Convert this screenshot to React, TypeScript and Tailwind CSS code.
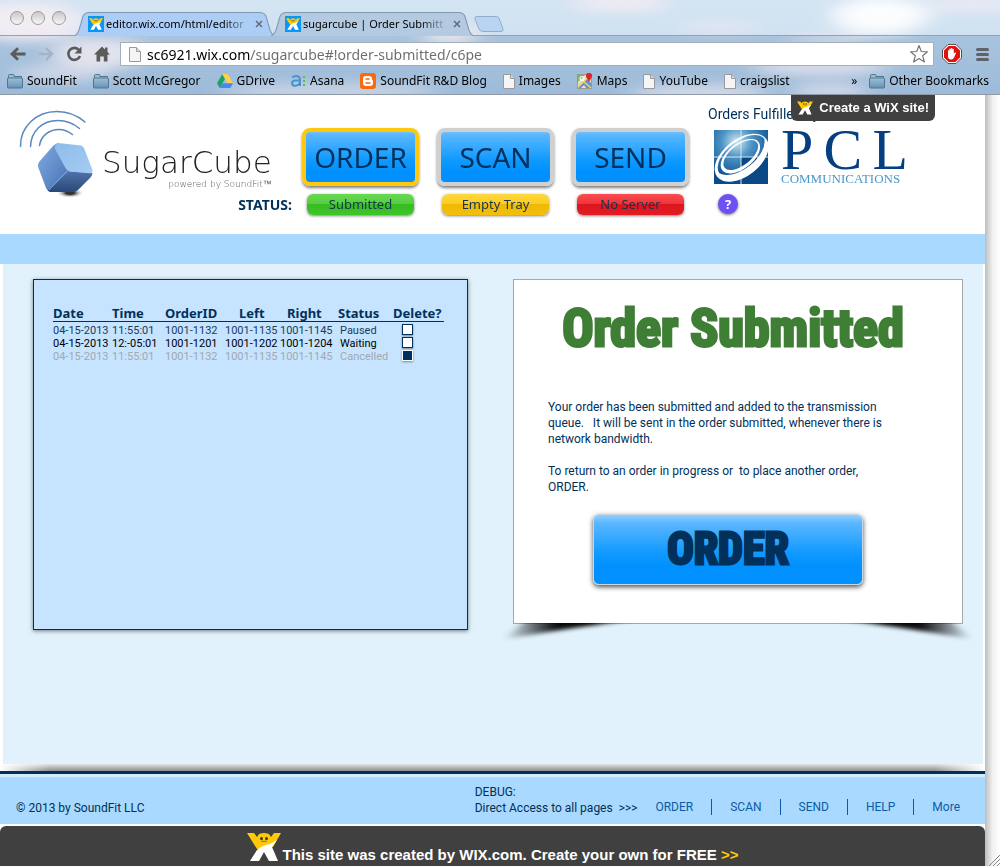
import React, { useState } from "react";

const TEXT = "font-['Noto_Sans',sans-serif]";

function WixMan({ className }: { className: string }) {
  return (
    <svg viewBox="0 0 34 28" className={className} aria-hidden="true">
      <path d="M0 0H7L10 4L12 1Q17 -1 22 1L24 4L27 0H34L26 14L20 16L10 16Z" fill="#ffc90a" />
      <path d="M30 7L25 14L31 28H22L17 19L12 28H3L10 17Q16 12 23 11Z" fill="#fff" />
      <circle cx="14.500" cy="5.500" r="1.500" fill="#403a20" />
      <circle cx="19.500" cy="5.500" r="1.500" fill="#403a20" />
      <path d="M14 8Q17 9 20 8" stroke="#6b5a10" strokeWidth="0.800" fill="none" />
    </svg>
  );
}

function WixFavicon() {
  return (
    <span className="flex size-4 shrink-0 items-center justify-center bg-[#0a96f5]">
      <WixMan className="h-3 w-[14px]" />
    </span>
  );
}

function Clouds() {
  return (
    <svg className="absolute inset-0 h-full w-full" viewBox="0 0 1000 95" preserveAspectRatio="none" aria-hidden="true">
      <defs>
        <linearGradient id="sky" x1="0" y1="0" x2="0" y2="1">
          <stop offset="0" stopColor="#d3e4f3" />
          <stop offset="0.370" stopColor="#d0e1f1" />
          <stop offset="0.380" stopColor="#a8c3dd" />
          <stop offset="1" stopColor="#9dbbd9" />
        </linearGradient>
        <filter id="soft" filterUnits="userSpaceOnUse" x="-50" y="-30" width="1100" height="160">
          <feGaussianBlur stdDeviation="12 6" />
        </filter>
      </defs>
      <rect width="1000" height="95" fill="url(#sky)" />
      <g filter="url(#soft)" fill="#f5edf3">
        <ellipse cx="25" cy="22" rx="60" ry="20" opacity="0.9" />
        <ellipse cx="100" cy="54" rx="50" ry="16" opacity="0.75" />
        <ellipse cx="60" cy="74" rx="50" ry="9" opacity="0.5" />
        <ellipse cx="620" cy="3" rx="50" ry="9" opacity="0.8" />
        <ellipse cx="880" cy="16" rx="48" ry="19" fill="#fff" opacity="0.9" />
        <ellipse cx="970" cy="4" rx="50" ry="9" opacity="0.6" />
        <ellipse cx="450" cy="36" rx="28" ry="10" opacity="0.8" />
        <ellipse cx="720" cy="27" rx="45" ry="6" opacity="0.5" />
        <ellipse cx="830" cy="40" rx="40" ry="6" opacity="0.5" />
        <ellipse cx="820" cy="68" rx="70" ry="8" opacity="0.7" />
        <ellipse cx="700" cy="94" rx="70" ry="9" opacity="0.6" />
        <ellipse cx="830" cy="92" rx="40" ry="8" opacity="0.6" />
        <ellipse cx="330" cy="92" rx="110" ry="8" opacity="0.5" />
      </g>
    </svg>
  );
}

function Tab({ title, active }: { title: string; active?: boolean }) {
  return (
    <div className={active ? "relative z-10 -ml-1 h-6 w-[203px]" : "relative h-6 w-[201px]"}>
      <svg className="absolute inset-0 h-full w-full" viewBox="0 0 200 24" preserveAspectRatio="none" aria-hidden="true">
        <path
          d="M0 24Q3 23 5 18L9 4Q11 .5 15 .5H185Q189 .5 191 4L195 18Q197 23 200 24"
          fill={active ? "#b3cae1" : "#abcdf6"}
          stroke="#8296ac"
          strokeWidth="1"
        />
      </svg>
      <div className="relative flex h-full items-center pl-3.5 pr-3">
        <WixFavicon />
        <a
          href="#tab"
          className="ml-0.5 w-[146px] shrink-0 whitespace-nowrap text-[11px] text-black [mask-image:linear-gradient(90deg,#000_80%,transparent)]"
        >
          {title}
        </a>
        <button aria-label={`Close ${title}`} className="ml-0.5 flex size-3 items-center justify-center">
          <svg viewBox="0 0 8 8" className="size-2" aria-hidden="true">
            <path d="M1 1L7 7M7 1L1 7" stroke="#5c6672" strokeWidth="1.400" />
          </svg>
        </button>
      </div>
    </div>
  );
}

function FolderIcon() {
  return (
    <svg viewBox="0 0 16 15" className="h-[15px] w-4 shrink-0" aria-hidden="true">
      <defs>
        <linearGradient id="folder" x1="0" y1="0" x2="0" y2="1">
          <stop offset="0" stopColor="#9fbfd6" />
          <stop offset="1" stopColor="#6592b5" />
        </linearGradient>
      </defs>
      <path d="M1.500 3V1.500Q1.500 .5 2.500 .5H6Q7 .5 7 1.500V2.500H14.500V5H1.500Z" fill="#9cbbd1" stroke="#50758f" />
      <rect x="0.500" y="4" width="15" height="10" rx="1" fill="url(#folder)" stroke="#50758f" />
    </svg>
  );
}

function PageIcon() {
  return (
    <svg viewBox="0 0 12 15" className="h-[15px] w-3 shrink-0" aria-hidden="true">
      <path d="M.5 .5H7.500L11.500 4.500V14.500H.5Z" fill="#f5f5f5" stroke="#9a9a9a" />
      <path d="M7.500 .5V4.500H11.500" fill="#ddd" stroke="#9a9a9a" />
    </svg>
  );
}

function DriveIcon() {
  return (
    <svg viewBox="0 0 16 14" className="h-[14px] w-4 shrink-0" aria-hidden="true">
      <path d="M5.300 0L8 4.700L2.700 14L0 9.300Z" fill="#1da462" />
      <path d="M5.300 0H10.700L16 9.300H10.700Z" fill="#ffd04b" />
      <path d="M5.400 9.300H16L13.300 14H2.700Z" fill="#4688f1" />
    </svg>
  );
}

function AsanaIcon() {
  return (
    <svg viewBox="0 0 15 12" className="h-3 w-[15px] shrink-0" aria-hidden="true">
      <path d="M1 2.500Q5 0 8 2Q9 3 9 5V11M9 5.500H4Q1 6 1 8.200Q1.500 11 4.500 10.700Q8 10.500 9 7.500" fill="none" stroke="#4295d1" strokeWidth="2" />
      <path d="M12 1H14V3H12ZM12 5H14V7H12ZM12 9H14V11H12Z" fill="#5ebd45" />
    </svg>
  );
}

function BloggerIcon() {
  return (
    <svg viewBox="0 0 16 16" className="size-4 shrink-0" aria-hidden="true">
      <rect width="16" height="16" rx="3" fill="#f76b12" />
      <path d="M6 3H9Q12 3 12 6Q12 7 13 7.500V10Q13 13 10 13H6Q3 13 3 10V6Q3 3 6 3Z" fill="#fff" />
      <path d="M6 6H9M6 10H10" stroke="#f76b12" strokeWidth="1.500" strokeLinecap="round" />
    </svg>
  );
}

function MapsIcon() {
  return (
    <svg viewBox="0 0 16 16" className="size-4 shrink-0" aria-hidden="true">
      <rect x="0.500" y="1.500" width="14" height="14" fill="#e7e3d5" stroke="#9a9a8a" />
      <path d="M1 2H8L1 9Z" fill="#84b45c" />
      <path d="M1 15L10 6L14 10V15H9L7 12L4 15Z" fill="#6b92c8" />
      <path d="M1 13L11 3M6 8L14 15" stroke="#f5d458" strokeWidth="1.600" />
      <circle cx="5" cy="5.500" r="2" fill="none" stroke="#fff" strokeWidth="1.200" />
      <path d="M12 9L9.500 4.500A3 3 0 1 1 14.500 4.500Z" fill="#d8262c" />
    </svg>
  );
}

const bookmarks: [string, () => React.JSX.Element][] = [
  ["SoundFit", FolderIcon],
  ["Scott McGregor", FolderIcon],
  ["GDrive", DriveIcon],
  ["Asana", AsanaIcon],
  ["SoundFit R&D Blog", BloggerIcon],
  ["Images", PageIcon],
  ["Maps", MapsIcon],
  ["YouTube", PageIcon],
  ["craigslist", PageIcon],
];

function BrowserChrome() {
  return (
    <div className="relative shrink-0 overflow-hidden border-b border-[#8f9aa6]">
      <Clouds />
      <div className="relative flex h-9 items-end border-b border-[#8ea3b8] pl-2.5">
        <div className="flex gap-[7px] self-center">
          {["Close window", "Minimise window", "Zoom window"].map((n) => (
            <button
              key={n}
              aria-label={n}
              className="size-[14px] rounded-full border border-[#9b9b9b] bg-linear-to-b from-[#c9c9c9] to-[#f7f7f7]"
            />
          ))}
        </div>
        <div className="-mb-px ml-2 flex">
          <Tab title="editor.wix.com/html/editor" />
          <Tab title="sugarcube | Order Submitt" active />
        </div>
        <button aria-label="New tab" className="mb-[3px] h-4 w-[30px]">
          <svg viewBox="0 0 30 16" className="h-4 w-[30px]" aria-hidden="true">
            <path d="M3 .5H22Q24 .5 25 2L29 13Q29.500 15.500 27 15.500H9Q6 15.500 5 13L1 3Q.5 .5 3 .5Z" fill="#b9d3f3" stroke="#93acc9" />
          </svg>
        </button>
      </div>

      <div className="relative flex h-9 items-center pl-2.5 pr-[11px]">
        <div className="flex items-center gap-3 text-[#5b5b5b]">
          <button aria-label="Back">
            <svg viewBox="0 0 16 14" className="h-[14px] w-4" aria-hidden="true">
              <path d="M15.500 7H3M8 1.200L2 7L8 12.800" fill="none" stroke="currentColor" strokeWidth="2.800" />
            </svg>
          </button>
          <button aria-label="Forward" className="text-[#a5b5c8]">
            <svg viewBox="0 0 16 14" className="h-[14px] w-4" aria-hidden="true">
              <path d="M.5 7H13M8 1.200L14 7L8 12.800" fill="none" stroke="currentColor" strokeWidth="2.500" />
            </svg>
          </button>
          <button aria-label="Reload">
            <svg viewBox="0 0 16 16" className="size-4" aria-hidden="true">
              <path d="M13 4A6 6 0 1 0 14 10" fill="none" stroke="currentColor" strokeWidth="2.600" />
              <path d="M15.500 .5V7.500H8.500Z" fill="currentColor" />
            </svg>
          </button>
          <button aria-label="Home">
            <svg viewBox="0 0 16 16" className="size-4" aria-hidden="true">
              <path d="M8 .5L11 3.500V1.500H13.500V6L16 8.500H13.500V15.500H9.800V10.500H6.200V15.500H2.500V8.500H0Z" fill="currentColor" />
            </svg>
          </button>
        </div>
        <div className="ml-2.5 flex h-6 flex-1 items-center border border-[#a5afba] bg-white pl-2 pr-1">
          <PageIcon />
          <input
            aria-label="Address"
            defaultValue="sc6921.wix.com/sugarcube#!order-submitted/c6pe"
            className="ml-1.5 min-w-0 flex-1 bg-[linear-gradient(90deg,#000_103px,#6b6b6b_103px)] bg-clip-text text-[14px] text-transparent outline-none"
          />
          <button aria-label="Bookmark this page">
            <svg viewBox="0 0 20 20" className="size-5" aria-hidden="true">
              <path d="M10 1.500L12.300 7.500L18.500 7.800L13.700 11.800L15.400 18L10 14.500L4.600 18L6.300 11.800L1.500 7.800L7.700 7.500Z" fill="#fff" stroke="#777" strokeWidth="1.200" strokeLinejoin="round" />
            </svg>
          </button>
        </div>
        <button aria-label="Ad blocker" className="ml-2">
          <svg viewBox="0 0 20 20" className="size-5" aria-hidden="true">
            <path d="M6 .5H14L19.500 6V14L14 19.500H6L.5 14V6Z" fill="#fff" stroke="#555" />
            <path d="M6.600 2H13.400L18 6.600V13.400L13.400 18H6.600L2 13.400V6.600Z" fill="#e5100c" />
            <path d="M6 9.500V6.500Q6.700 5.800 7.300 6.500V5Q8 4.200 8.700 5V4.500Q9.500 3.700 10.300 4.500V5Q11 4.300 11.800 5V9.500L13 8.500Q14.300 8.300 14 9.300L12 13.500Q11.300 15.500 9.300 15.500Q6 15.500 6 12Z" fill="#fff" />
          </svg>
        </button>
        <button aria-label="Menu" className="ml-3.5 flex w-[13px] flex-col gap-0.5">
          <span className="h-[3px] rounded-full bg-[#5f6368]" />
          <span className="h-[3px] rounded-full bg-[#5f6368]" />
          <span className="h-[3px] rounded-full bg-[#5f6368]" />
        </button>
      </div>

      <nav aria-label="Bookmarks" className="relative flex h-[22px] items-start gap-4 pl-[7px] pr-[11px] text-[12px] leading-[18px] text-black">
        {bookmarks.map(([name, Icon]) => (
          <a key={name} href="#bookmark" className="flex items-center gap-1 whitespace-nowrap">
            <Icon />
            {name}
          </a>
        ))}
        <button className="-mr-1 ml-auto" aria-label="More bookmarks">»</button>
        <a href="#bookmark" className="flex items-center gap-1 whitespace-nowrap">
          <FolderIcon />
          Other Bookmarks
        </a>
      </nav>
    </div>
  );
}

function SugarCubeLogo() {
  return (
    <div className="flex">
      <svg viewBox="18 108 78 92" className="h-[92px] w-[78px] shrink-0" aria-hidden="true">
        <defs>
          <linearGradient id="cubeTop" x1="0" y1="0" x2="1" y2="1">
            <stop offset="0" stopColor="#8dbbe9" />
            <stop offset="1" stopColor="#a5cdf4" />
          </linearGradient>
          <linearGradient id="cubeLeft" x1="0" y1="0.200" x2="0.800" y2="1">
            <stop offset="0" stopColor="#79a6dd" />
            <stop offset="1" stopColor="#4c76b8" />
          </linearGradient>
          <linearGradient id="cubeFront" x1="0.500" y1="0" x2="0.500" y2="1">
            <stop offset="0" stopColor="#5074ab" />
            <stop offset="1" stopColor="#2a4878" />
          </linearGradient>
          <radialGradient id="cubeShadow">
            <stop offset="0.300" stopColor="#333" />
            <stop offset="1" stopColor="#fff" stopOpacity="0" />
          </radialGradient>
        </defs>
        <g fill="none" stroke="#5b87bf" strokeWidth="1.500" strokeLinecap="round">
          <path d="M20.500 146.500C20 127 36 111.500 57 111.500Q73 111.500 85 122" />
          <path d="M30.500 146.500C31 131 42 120.500 58 120.500Q70 120.500 79.500 128.500" />
          <path d="M39.500 145.500C41 136 49 129.500 59 129.500Q66 129.500 72.500 134.500" />
        </g>
        <ellipse cx="70" cy="193" rx="14" ry="5" fill="url(#cubeShadow)" />
        <path d="M58 143Q55 144 53 146L39 162Q37 165 38.500 168L46 188Q48 192 51 192L69 171Z" fill="url(#cubeLeft)" />
        <path d="M69 171L92.500 173Q92 176 90 178L78 190Q76 192 73 192L50 192Q48 191 48 190Z" fill="url(#cubeFront)" />
        <path d="M58 143L81 145.500Q83 146 84 148L92.500 170Q93 173 90 173L70 171.500L66 169L55 149Q54 145 58 143Z" fill="url(#cubeTop)" />
        <path d="M58 144L68.500 169.500L49 190M69 171L91 173" fill="none" stroke="#9cc2ec" strokeWidth="0.700" />
      </svg>
      <div className="ml-1.5 flex flex-col items-end pt-[37px] font-['DejaVu_Sans_Light','DejaVu_Sans',sans-serif] font-extralight text-[#222]">
        <span className="text-[31px] leading-[34px]">SugarCube</span>
        <span className="text-[9px] leading-[10px] text-[#555]">powered by SoundFit™</span>
      </div>
    </div>
  );
}

function PclLogo() {
  return (
    <div className="flex items-start gap-[13px]">
      <svg viewBox="0 0 54 54" className="size-[54px] shrink-0" aria-hidden="true">
        <defs>
          <radialGradient id="globe" cx="0.420" cy="0.220" r="0.700">
            <stop offset="0" stopColor="#cfe6f3" />
            <stop offset="0.400" stopColor="#4d95c5" />
            <stop offset="1" stopColor="#0a4b8c" />
          </radialGradient>
          <clipPath id="globeClip"><rect width="54" height="54" /></clipPath>
        </defs>
        <rect width="54" height="54" fill="url(#globe)" />
        <rect x="27" y="27" width="27" height="27" fill="#0a4785" />
        <path d="M27 0V54M0 27H54" stroke="#d8e8f2" strokeWidth="1" />
        <g clipPath="url(#globeClip)">
          <g transform="rotate(-38 27 27)">
            <path fillRule="evenodd" fill="#fff" d="M-4 28A31 18.500 0 0 1 58 28A31 18.500 0 0 1 -4 28ZM0 26.500A29 16 0 0 0 56.500 27A28 15 0 0 0 0 26.500Z" />
            <path fillRule="evenodd" fill="#fff" d="M4 26A23 12.500 0 0 1 50 26A23 12.500 0 0 1 4 26ZM7.500 25.500A20.500 10 0 0 0 48.500 25.500A20.500 10.500 0 0 0 7.500 25.500Z" />
          </g>
        </g>
      </svg>
      <div className="w-[127px] font-['Liberation_Serif',serif]">
        <div className="flex justify-between text-[58px] leading-[40px] text-[#063e82]">
          <span>P</span>
          <span>C</span>
          <span>L</span>
        </div>
        <div className="pt-0.5 text-[13px] leading-[14px] text-[#4a97c9]">COMMUNICATIONS</div>
      </div>
    </div>
  );
}

const blueFace = "bg-[linear-gradient(180deg,#8fcfff_0%,#5ab6ff_12%,#109aff_55%,#0090ff_75%,#0090ff_100%)]";

const stages = [
  { name: "ORDER", status: "Submitted", frame: "border-[#ffc80a]", pill: "bg-[linear-gradient(180deg,#68d852_0%,#55cd40_50%,#37bd22_50%,#3fc42a_100%)]" },
  { name: "SCAN", status: "Empty Tray", frame: "border-[#d0d0d0]", pill: "bg-[linear-gradient(180deg,#ffd83e_0%,#fccb20_50%,#eeb908_50%,#f1bf0c_100%)]" },
  { name: "SEND", status: "No Server", frame: "border-[#d0d0d0]", pill: "bg-[linear-gradient(180deg,#f84e50_0%,#ef3237_50%,#dc161e_50%,#e31c24_100%)]" },
];

function SiteHeader() {
  return (
    <header className="relative grid h-[139px] shrink-0 grid-cols-[284px_117px_117px_117px_1fr] gap-x-[18px] bg-white">
      <div className="flex flex-col pl-[18px] pt-[13px]">
        <SugarCubeLogo />
        <span className="-mr-2 -mt-1 self-end text-[14px] font-bold leading-[18px] text-[#01305a]">STATUS:</span>
      </div>
      {stages.map((s) => (
        <div key={s.name} className="flex flex-col items-center pt-[33px]">
          <button className={`${blueFace} ${s.frame} h-[58px] w-full rounded-lg border-4 bg-origin-border text-[28px] leading-[50px] text-[#01305a] shadow-[0_2px_3px_rgba(0,0,0,0.5)]`}>
            {s.name}
          </button>
          <span className={`${s.pill} mt-2 h-[21px] w-[107px] rounded-md text-center text-[13px] leading-5 text-[#14344f] shadow-[0_1px_3px_rgba(0,0,0,0.5)]`}>
            {s.status}
          </span>
        </div>
      ))}
      <div className="flex flex-col items-start pt-[11px]">
        <span className="pl-px font-['Roboto',sans-serif] text-[14px] leading-4 text-[#01305a]">Orders Fulfilled by</span>
        <div className="pl-[7px] pt-2">
          <PclLogo />
        </div>
        <button className="ml-[11px] mt-2 size-5 rounded-full bg-[#6f50f5] text-[13px] font-bold leading-5 text-white shadow-[0_1px_3px_rgba(0,0,0,0.6)]" aria-label="Help">
          ?
        </button>
      </div>
      <a
        href="#create"
        className="absolute right-[50px] top-0 flex h-[26px] items-center gap-1.5 rounded-b-md bg-[#404040] px-1.5 font-['Liberation_Sans',sans-serif] text-[13px] font-bold text-white"
      >
        <WixMan className="h-[14px] w-4" />
        <span>Create a WiX site!</span>
      </a>
    </header>
  );
}

const orders = [
  { date: "04-15-2013", time: "11:55:01", id: "1001-1132", left: "1001-1135", right: "1001-1145", status: "Paused", tone: "text-[#1c3c58]" },
  { date: "04-15-2013", time: "12:-05:01", id: "1001-1201", left: "1001-1202", right: "1001-1204", status: "Waiting", tone: "text-black" },
  { date: "04-15-2013", time: "11:55:01", id: "1001-1132", left: "1001-1135", right: "1001-1145", status: "Cancelled", tone: "text-[#a3a8ad]" },
];

function OrdersPanel() {
  const [checked, setChecked] = useState([false, false, true]);
  return (
    <section className="min-h-[351px] self-start border border-[#01305a] bg-[#c6e4ff] pl-[19px] pt-[25px] shadow-[0_1px_4px_rgba(0,0,0,0.5)]">
      <table className="w-[391px] table-fixed border-collapse text-left font-['Roboto',sans-serif] text-[11px] leading-[13px]">
        <colgroup>
          <col className="w-[59px]" />
          <col className="w-[53px]" />
          <col className="w-[60px]" />
          <col className="w-[55px]" />
          <col className="w-[58px]" />
          <col className="w-[55px]" />
          <col />
        </colgroup>
        <thead>
          <tr className="whitespace-nowrap border-b border-[#01305a] font-['Noto_Sans',sans-serif] text-[13px] leading-4 text-[#01305a]">
            <th>Date</th>
            <th>Time</th>
            <th>OrderID</th>
            <th className="pl-3.5">Left</th>
            <th className="pl-[7px]">Right</th>
            <th>Status</th>
            <th>Delete?</th>
          </tr>
        </thead>
        <tbody className="before:block before:h-0.5 before:content-['']">
          {orders.map((o, i) => (
            <tr key={i} className={`${o.tone} whitespace-nowrap`}>
              <td>{o.date}</td>
              <td>{o.time}</td>
              <td>{o.id}</td>
              <td>{o.left}</td>
              <td>{o.right}</td>
              <td className="pl-0.5">{o.status}</td>
              <td className="pb-0.5 pl-[9px] align-top">
                <input
                  type="checkbox"
                  aria-label={`Delete order ${i + 1}`}
                  checked={checked[i]}
                  onChange={() => setChecked(checked.map((c, j) => (j === i ? !c : c)))}
                  className="block size-[11px] appearance-none border border-[#01305a] bg-white shadow-[0_1px_2px_rgba(0,0,0,0.4)] checked:border-white checked:bg-[#01305a]"
                />
              </td>
            </tr>
          ))}
        </tbody>
      </table>
    </section>
  );
}

function CurlShadow() {
  return (
    <svg viewBox="0 0 490 30" preserveAspectRatio="none" className="absolute -left-5 top-full h-[30px] w-[calc(100%+40px)]" aria-hidden="true">
      <defs>
        <filter id="curlBlur" filterUnits="userSpaceOnUse" x="-10" y="-30" width="510" height="70">
          <feGaussianBlur stdDeviation="4 2" />
        </filter>
        <linearGradient id="curlLeft" gradientUnits="userSpaceOnUse" x1="10" y1="0" x2="160" y2="0">
          <stop offset="0" stopOpacity="0" />
          <stop offset="0.350" stopOpacity="0.950" />
          <stop offset="0.600" stopOpacity="1" />
          <stop offset="1" stopOpacity="0" />
        </linearGradient>
        <linearGradient id="curlRight" gradientUnits="userSpaceOnUse" x1="480" y1="0" x2="330" y2="0">
          <stop offset="0" stopOpacity="0" />
          <stop offset="0.350" stopOpacity="0.950" />
          <stop offset="0.600" stopOpacity="1" />
          <stop offset="1" stopOpacity="0" />
        </linearGradient>
      </defs>
      <g filter="url(#curlBlur)">
        <path d="M35 -5H160Q90 2 8 17Z" fill="url(#curlLeft)" />
        <path d="M455 -5H330Q400 2 482 17Z" fill="url(#curlRight)" />
      </g>
    </svg>
  );
}

const display = "font-['Roboto_Condensed','Liberation_Sans_Narrow','Open_Sans_Condensed',sans-serif] font-bold";

function ConfirmationCard() {
  return (
    <section className="relative min-h-[345px] self-start border border-[#a5a9ad] bg-white">
      <CurlShadow />
      <h1 className={`${display} pr-2.5 pt-[18px] text-center text-[52px] leading-[62px] text-[#3f7e35] [-webkit-text-stroke:3px_#3f7e35] [paint-order:stroke]`}>
        Order Submitted
      </h1>
      <div className="mt-[39px] pl-[34px] pr-[68px] font-['Roboto',sans-serif] text-[12px] leading-4 text-[#01305a]">
        <p>Your order has been submitted and added to the transmission queue. &nbsp; It will be sent in the order submitted, whenever there is network bandwidth.</p>
        <p className="mt-4">
          To return to an order in progress or &nbsp;to place another order,
          <br />
          ORDER.
        </p>
      </div>
      <button className={`${blueFace} ${display} ml-[79px] mt-[19px] block h-[71px] w-[270px] rounded-md border border-[#c9d6e0] text-[44px] leading-[69px] text-[#01305a] shadow-[0_2px_5px_rgba(0,0,0,0.7)] [-webkit-text-stroke:3px_#01305a] [paint-order:stroke]`}>
        ORDER
      </button>
    </section>
  );
}

function SiteFooter() {
  return (
    <>
      <div className="h-[7px] shrink-0 bg-linear-to-b from-[#e4e4e4] to-[#8d8d8d] [mask-image:linear-gradient(90deg,transparent,#000_50px,#000_calc(100%-50px),transparent)]" />
      <footer className="flex h-[53px] shrink-0 items-end border-t-3 border-[#01305a] bg-[linear-gradient(180deg,#d3ebff_3px,#a9d9fe_3px)] pb-2 pl-4 font-['Roboto',sans-serif] text-[12px] leading-4 text-[#01305a]">
        <p className="flex-1">© 2013 by SoundFit LLC</p>
        <p className="whitespace-nowrap">
          DEBUG:
          <br />
          Direct Access to all pages &nbsp;&gt;&gt;&gt;
        </p>
        <nav aria-label="Pages" className="flex pb-px text-[#0d5ba5]">
          {["ORDER", "SCAN", "SEND", "HELP", "More"].map((n) => (
            <a key={n} href={`#${n.toLowerCase()}`} className="border-l border-[#0d5ba5] px-[18px] first:border-l-0 last:pr-[25px]">
              {n}
            </a>
          ))}
        </nav>
      </footer>
      <a
        href="#wix"
        className="mt-0.5 flex h-10 shrink-0 items-end justify-center gap-0.5 rounded-t-md bg-[#404040] pb-[3px] font-['Liberation_Sans',sans-serif] text-[15px] font-bold leading-4 text-white"
      >
        <WixMan className="mb-0.5 h-7 w-[34px]" />
        <span>
          This site was created by WIX.com. Create your own for FREE <span className="text-[#ffc90a]">&gt;&gt;</span>
        </span>
      </a>
    </>
  );
}

export default function App() {
  return (
    <div className={`${TEXT} flex min-h-screen flex-col bg-white`}>
      <BrowserChrome />
      <div className="flex flex-1">
        <div className="flex min-w-0 flex-1 flex-col">
          <SiteHeader />
          <div className="h-[30px] shrink-0 bg-[#a9d9fe]" />
          <main className="ml-[3px] mr-0.5 grid flex-1 grid-cols-[435fr_450fr] gap-[45px] bg-[#e1f2fc] pl-[30px] pr-5 pt-[15px]">
            <OrdersPanel />
            <ConfirmationCard />
          </main>
          <SiteFooter />
        </div>
        <div className="flex w-[15px] shrink-0 items-end justify-end bg-linear-to-r from-[#bdbdbd] via-[#f0f0f0] to-white">
          <svg viewBox="0 0 12 12" className="size-3" aria-hidden="true">
            <path d="M1 12L12 1M5 12L12 5M9 12L12 9" stroke="#888" />
          </svg>
        </div>
      </div>
    </div>
  );
}
